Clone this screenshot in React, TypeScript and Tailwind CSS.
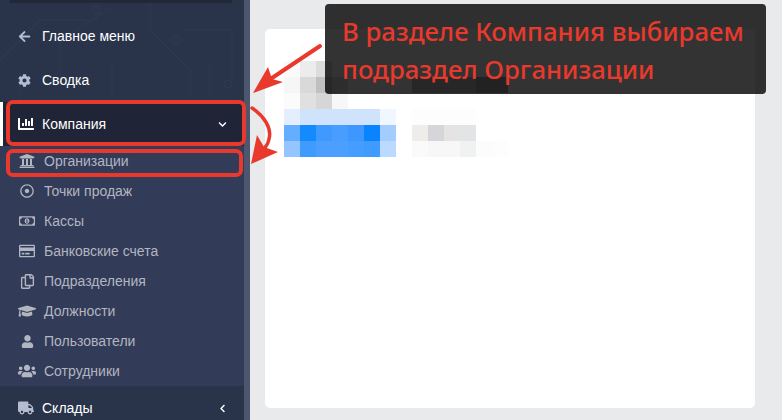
import {
  FaArrowLeft,
  FaChartBar,
  FaChevronDown,
  FaChevronLeft,
  FaCog,
  FaGraduationCap,
  FaRegCopy,
  FaRegCreditCard,
  FaRegDotCircle,
  FaRegMoneyBillAlt,
  FaTruck,
  FaUniversity,
  FaUser,
  FaUsers,
} from "react-icons/fa";

const subItems = [
  { label: "Организации", icon: FaUniversity, size: "text-[16px]" },
  { label: "Точки продаж", icon: FaRegDotCircle, size: "text-[14px]" },
  { label: "Кассы", icon: FaRegMoneyBillAlt, size: "text-[16px]" },
  { label: "Банковские счета", icon: FaRegCreditCard, size: "text-[16px]" },
  { label: "Подразделения", icon: FaRegCopy, size: "text-[15px]" },
  { label: "Должности", icon: FaGraduationCap, size: "text-[18px]" },
  { label: "Пользователи", icon: FaUser, size: "text-[13px]" },
  { label: "Сотрудники", icon: FaUsers, size: "text-[18px]" },
];

// x, y, colour of the pixelated blocks (16px grid)
const blocks: [number, number, string][] = [
  [16, 0, "#fdfdfd"], [32, 0, "#fefefe"],
  [0, 16, "#fafafa"], [16, 16, "#ececec"], [32, 16, "#dcdcdc"],
  [0, 32, "#f6f6f6"], [16, 32, "#d9d9d9"], [32, 32, "#c0c0c0"], [48, 32, "#e2e2e2"],
  [128, 32, "#c4c4c4"], [144, 32, "#c4c4c4"], [160, 32, "#c4c4c4"], [176, 32, "#c4c4c4"], [192, 32, "#acacac"], [208, 32, "#acacac"],
  [0, 48, "#fbfbfb"], [16, 48, "#e0e0e0"], [32, 48, "#d6d6d6"], [48, 48, "#f7f7f7"],
  [0, 64, "#e3efff"], [16, 64, "#cfe3fc"], [32, 64, "#cfe3fc"], [48, 64, "#cfe3fc"], [64, 64, "#cfe3fc"], [80, 64, "#cfe3fc"], [96, 64, "#f1f7ff"],
  [0, 80, "#64adff"], [16, 80, "#138bff"], [32, 80, "#4099ff"], [48, 80, "#489dff"], [64, 80, "#3d97ff"], [80, 80, "#0a83ff"], [96, 80, "#a3ccff"],
  [0, 96, "#95c5ff"], [16, 96, "#409bff"], [32, 96, "#4a9fff"], [48, 96, "#4a9fff"], [64, 96, "#459dff"], [80, 96, "#409bff"], [96, 96, "#bcdaff"],
  [128, 64, "#fdfdfd"], [144, 64, "#fdfdfd"], [160, 64, "#fdfdfd"], [176, 64, "#fdfdfd"],
  [128, 80, "#eeedea"], [144, 80, "#d5d5da"], [160, 80, "#e5e3e4"], [176, 80, "#e3e4e6"],
  [128, 96, "#fafafa"], [144, 96, "#f7f7f7"], [160, 96, "#f7f7f7"], [176, 96, "#f0f2f1"], [192, 96, "#fcfcfc"], [208, 96, "#fdfdfd"],
];

function Circuit() {
  return (
    <svg className="absolute inset-0 h-full w-full" fill="none" stroke="#2f3a53" strokeWidth="1">
      <path d="M0 60 L40 20 L96 20 L96 3 M60 90 L60 40 L110 8 M112 60 L112 102 M150 3 L150 30 L190 70 L190 102 M180 30 L232 30 L232 80 M210 60 L210 102 M20 102 L20 70" />
      <circle cx="176" cy="40" r="4" />
      <circle cx="96" cy="10" r="4" />
      <circle cx="228" cy="84" r="4" />
    </svg>
  );
}

export default function App() {
  return (
    <div className="relative flex h-[420px] w-[782px] overflow-hidden bg-[#e9eaec] font-['Liberation_Sans',Arial,sans-serif]">
      <aside className="w-[244px] shrink-0 overflow-hidden bg-[#29334a]">
        <div className="relative">
          <Circuit />
          <div className="relative ml-[10px] h-[3px] w-[222px] bg-[#232838]" />
          <div className="relative h-[11px]" />
          <div className="relative flex h-11 items-center pl-[18px] text-[14px] text-white">
            <FaArrowLeft className="w-[13px] text-[13px] text-[#b4bcd2]" />
            <span className="ml-[11px]">Главное меню</span>
          </div>
          <div className="relative flex h-11 items-center pl-[18px] text-[14px] text-white">
            <FaCog className="w-[13px] text-[13px] text-[#b4bcd2]" />
            <span className="ml-[11px]">Сводка</span>
          </div>
        </div>

        <div className="flex h-11 items-center border-l-[3px] border-white bg-[#1f2436] pl-[15px] pr-[17px] text-[14px] text-white">
          <FaChartBar className="w-[16px] text-[16px]" />
          <span className="ml-[8px]">Компания</span>
          <FaChevronDown className="ml-auto text-[9px]" />
        </div>

        <ul className="bg-[#323b58] text-[#b2b6c0]">
          {subItems.map((item) => {
            const Icon = item.icon;
            return (
              <li key={item.label} className="flex h-[30px] items-center pl-[17px] text-[14px]">
                <span className="flex w-[20px] justify-center">
                  <Icon className={item.size} />
                </span>
                <span className="ml-[7px]">{item.label}</span>
              </li>
            );
          })}
        </ul>

        <div className="relative flex h-11 items-center bg-[#29334a] pl-[18px] pr-[17px] text-[14px] text-white">
          <FaTruck className="w-[16px] text-[16px] text-[#b4bcd2]" />
          <span className="ml-[8px]">Склады</span>
          <FaChevronLeft className="ml-auto text-[9px]" />
        </div>
      </aside>

      <div className="w-[6px] shrink-0 bg-[#4c566f]" />

      <main className="flex-1 pb-3 pl-[15px] pr-[27px] pt-[29px]">
        <div className="relative h-full rounded-[5px] bg-white">
          <svg className="absolute left-[19px] top-[16px]" width="240" height="112">
            {blocks.map(([x, y, c]) => (
              <rect key={`${x}-${y}`} x={x} y={y} width="16" height="16" fill={c} />
            ))}
          </svg>
        </div>
      </main>

      {/* annotation caption */}
      <div className="absolute left-[325px] top-1 h-[90px] w-[441px] rounded-[4px] bg-black/80 pl-[17px] pt-[9px] font-['Noto_Sans',sans-serif] text-[25.7px] font-medium leading-[38px] text-[#e8392c]">
        <p>В разделе Компания выбираем</p>
        <p>подраздел Организации</p>
      </div>

      {/* red highlight frames */}
      <div className="absolute left-[6px] top-[100px] h-[46px] w-[240px] rounded-[7px] border-4 border-[#e8392c]" />
      <div className="absolute left-[6px] top-[149px] h-[28px] w-[237px] rounded-[7px] border-4 border-[#e8392c]" />

      {/* arrows */}
      <svg className="absolute inset-0" width="782" height="420" fill="none">
        <path d="M320 46 L272 78" stroke="#e8392c" strokeWidth="4" strokeLinecap="round" />
        <path d="M253 93 L268 67 L272 79 L283 82 Z" fill="#e8392c" />
        <path d="M252 108 C264 116 272 128 269 139 C268 144 266 147 263 149" stroke="#e8392c" strokeWidth="3.5" strokeLinecap="round" />
        <path d="M251 164 L257 135 L264 147 L278 152 Z" fill="#e8392c" />
      </svg>
    </div>
  );
}
